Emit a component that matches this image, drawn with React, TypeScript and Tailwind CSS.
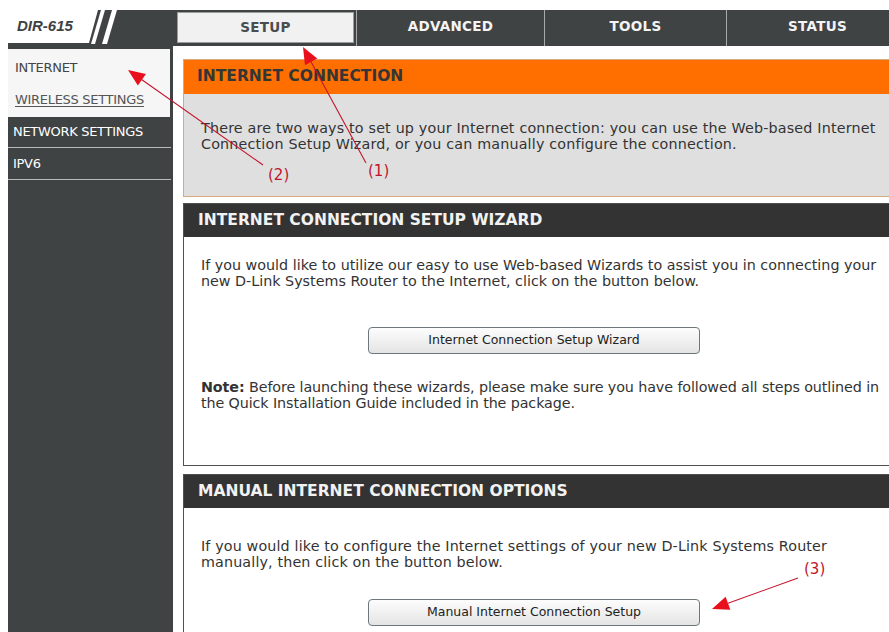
import React from "react";

type Pt = [number, number];

// Red call-out arrow: thin shaft, filled triangular head at `tip`.
function CallOut({ from, tip, label, labelAt }: { from: Pt; tip: Pt; label: string; labelAt: Pt }) {
  const dx = tip[0] - from[0];
  const dy = tip[1] - from[1];
  const len = Math.hypot(dx, dy);
  const ux = dx / len;
  const uy = dy / len;
  const headLen = 17;
  const half = 7;
  const bx = tip[0] - ux * headLen;
  const by = tip[1] - uy * headLen;
  const p1 = `${bx - uy * half},${by + ux * half}`;
  const p2 = `${bx + uy * half},${by - ux * half}`;
  return (
    <g>
      <line x1={from[0]} y1={from[1]} x2={bx} y2={by} stroke="#c4142c" strokeWidth={1.1} />
      <polygon points={`${tip[0]},${tip[1]} ${p1} ${p2}`} fill="#e8101c" />
      <text
        x={labelAt[0]}
        y={labelAt[1]}
        fill="#c0142e"
        fontSize={15}
        fontFamily="'DejaVu Sans', Verdana, sans-serif"
      >
        {label}
      </text>
    </g>
  );
}

function Logo() {
  return (
    <div className="flex w-[167px] h-[36px] shrink-0">
      <div className="flex flex-col w-[80px]">
        <div className="h-[33px] bg-white flex items-center pl-[9px] font-['Liberation_Sans',Arial,sans-serif] font-bold italic text-[15px] text-[#3e4143]">
          DIR-615
        </div>
        <div className="h-[3px] bg-[#404344]" />
      </div>
      <svg width="87" height="36" viewBox="0 0 87 36" className="block">
        <rect x="0" y="0" width="87" height="36" fill="#404344" />
        <polygon points="0,0 10,0 1,33 0,33" fill="#ffffff" />
        <polygon points="13,0 17,0 7,34 3,34" fill="#ffffff" />
        <polygon points="24,0 29,0 19,34 14,34" fill="#ffffff" />
      </svg>
    </div>
  );
}

function Tabs() {
  const other = "flex items-center justify-center border-l border-[#a7a9aa] text-[#f4f4f4] pb-[3px]";
  return (
    <div className="flex h-[36px] bg-[#404344] font-bold text-[13.5px] tracking-[0.3px] shrink-0">
      <div className="w-[181px] pt-[2px] px-[2px] pb-[3px]">
        <div className="h-full bg-[#f1f1f1] border border-[#9c9c9c] flex items-center justify-center text-[#4a4d4f]">
          SETUP
        </div>
      </div>
      <div className={`w-[188px] ${other}`}>ADVANCED</div>
      <div className={`w-[182px] ${other}`}>TOOLS</div>
      <div className={`w-[182px] ${other}`}>STATUS</div>
    </div>
  );
}

function Sidebar() {
  return (
    <div className="w-[165px] shrink-0 bg-[#404344] pt-[3px] text-[13px] tracking-[-0.3px]">
      <div className="w-[162px] h-[68px] pt-[3px] bg-[#f6f6f6]">
        <div className="h-[32px] flex items-center pl-[7px] text-[#444]">INTERNET</div>
        <div className="h-[32px] flex items-center pl-[7px] text-[#555] underline underline-offset-2">
          WIRELESS SETTINGS
        </div>
      </div>
      <div className="w-[163px] h-[31px] flex items-center pl-[5px] text-white border-b border-[#b9baba]">
        NETWORK SETTINGS
      </div>
      <div className="w-[163px] h-[32px] flex items-center pl-[5px] text-white border-b border-[#b9baba]">
        IPV6
      </div>
    </div>
  );
}

function WideButton({ children }: { children: React.ReactNode }) {
  return (
    <div className="ml-[184px] w-[332px] h-[27px] rounded-[4px] border border-[#6f777c] bg-gradient-to-b from-[#fdfdfd] to-[#e4e4e4] flex items-center justify-center text-[12.5px] text-[#222]">
      {children}
    </div>
  );
}

export default function App() {
  return (
    <div className="relative w-[889px] h-[632px] overflow-hidden bg-white font-['DejaVu_Sans',Verdana,sans-serif] text-[#333]">
      <div className="flex pt-[10px] pl-[8px] h-[46px]">
        <Logo />
        <Tabs />
      </div>

      <div className="flex pl-[8px] h-[586px]">
        <Sidebar />

        <main className="ml-[10px] w-[740px] shrink-0 pt-[13px] flex flex-col">
          {/* Internet connection intro */}
          <section className="h-[138px] border border-[#d8a97c] flex flex-col">
            <div className="h-[34px] bg-[#ff6f00] flex items-center pl-[13px] text-[15.5px] font-bold text-[#353535]">
              INTERNET CONNECTION
            </div>
            <div className="flex-1 bg-[#dfdfdf] pl-[17px] pt-[27px] text-[14.3px] leading-[15.5px] tracking-[0.18px] whitespace-nowrap">
              There are two ways to set up your Internet connection: you can use the Web-based Internet
              <br />
              Connection Setup Wizard, or you can manually configure the connection.
            </div>
          </section>

          {/* Setup wizard */}
          <section className="mt-[6px] h-[263px] border border-[#505050] flex flex-col">
            <div className="h-[33px] bg-[#333333] flex items-center pl-[14px] text-[15.5px] font-bold text-[#f2f2f2]">
              INTERNET CONNECTION SETUP WIZARD
            </div>
            <div className="pl-[17px] pt-[21px] text-[14.3px] leading-[15.5px] whitespace-nowrap">
              If you would like to utilize our easy to use Web-based Wizards to assist you in connecting your
              <br />
              new D-Link Systems Router to the Internet, click on the button below.
            </div>
            <div className="mt-[38px]">
              <WideButton>Internet Connection Setup Wizard</WideButton>
            </div>
            <div className="pl-[17px] pt-[26px] text-[14.3px] leading-[15.5px] tracking-[-0.1px] whitespace-nowrap">
              <span className="font-bold">Note:</span> Before launching these wizards, please make sure you have followed all steps outlined in
              <br />
              the Quick Installation Guide included in the package.
            </div>
          </section>

          {/* Manual setup */}
          <section className="mt-[8px] flex-1 border border-b-0 border-[#505050] flex flex-col">
            <div className="h-[33px] bg-[#333333] flex items-center pl-[14px] text-[15.5px] font-bold text-[#f2f2f2]">
              MANUAL INTERNET CONNECTION OPTIONS
            </div>
            <div className="pl-[17px] pt-[31px] text-[14.3px] leading-[15.5px] tracking-[0.14px] whitespace-nowrap">
              If you would like to configure the Internet settings of your new D-Link Systems Router
              <br />
              manually, then click on the button below.
            </div>
            <div className="mt-[29px]">
              <WideButton>Manual Internet Connection Setup</WideButton>
            </div>
          </section>
        </main>
      </div>

      <svg className="absolute inset-0 pointer-events-none" width="889" height="632" viewBox="0 0 889 632">
        <CallOut from={[366, 163]} tip={[303, 47]} label="(1)" labelAt={[368, 176]} />
        <CallOut from={[263, 165]} tip={[128, 70]} label="(2)" labelAt={[268, 180]} />
        <CallOut from={[798, 578]} tip={[712, 609]} label="(3)" labelAt={[804, 574]} />
      </svg>
    </div>
  );
}
